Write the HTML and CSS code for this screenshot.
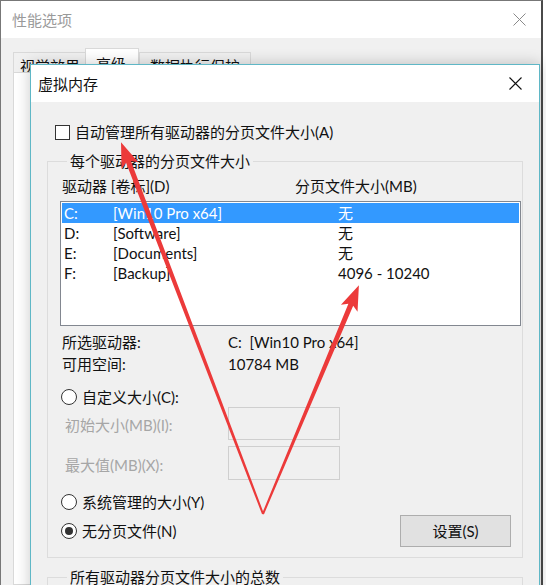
FILE: index.html
```html
<!DOCTYPE html>
<html lang="zh-CN">
<head>
    <meta charset="UTF-8">
    <meta name="viewport" content="width=device-width, initial-scale=1.0">
    <title>虚拟内存</title>
    <link rel="stylesheet" href="styles.css">
</head>
<body>
    <div class="screen">
        <div class="outer">
            <div class="outer-title">
                <span>性能选项</span>
                <svg class="close-icon" width="13" height="13" viewBox="0 0 13 13">
                    <path d="M0.5 0.5 L12.5 12.5 M12.5 0.5 L0.5 12.5" stroke="#8a8a8a" stroke-width="1" fill="none"/>
                </svg>
            </div>
            <div class="outer-body">
                <div class="tabs">
                    <span class="tab">视觉效果</span>
                    <span class="tab active">高级</span>
                    <span class="tab">数据执行保护</span>
                </div>
                <div class="tab-page"></div>
            </div>
        </div>

        <div class="dialog">
            <div class="dlg-title">
                <span>虚拟内存</span>
                <svg class="close-icon" width="13" height="13" viewBox="0 0 13 13">
                    <path d="M0.5 0.5 L12.5 12.5 M12.5 0.5 L0.5 12.5" stroke="#111" stroke-width="1.1" fill="none"/>
                </svg>
            </div>
            <div class="dlg-body">
                <div class="check-row">
                    <span class="checkbox"></span>
                    <span>自动管理所有驱动器的分页文件大小(A)</span>
                </div>

                <fieldset class="group">
                    <legend>每个驱动器的分页文件大小</legend>
                    <div class="list-head">
                        <span>驱动器 [卷标](D)</span>
                        <span>分页文件大小(MB)</span>
                    </div>
                    <div class="listbox">
                        <div class="list-row selected"><span>C:</span><span>[Win10 Pro x64]</span><span>无</span></div>
                        <div class="list-row"><span>D:</span><span>[Software]</span><span>无</span></div>
                        <div class="list-row"><span>E:</span><span>[Documents]</span><span>无</span></div>
                        <div class="list-row"><span>F:</span><span>[Backup]</span><span>4096 - 10240</span></div>
                    </div>

                    <div class="info">
                        <span>所选驱动器:</span><span>C:&nbsp; [Win10 Pro x64]</span>
                        <span>可用空间:</span><span>10784 MB</span>
                    </div>

                    <div class="radio-row first">
                        <span class="radio"></span>
                        <span>自定义大小(C):</span>
                    </div>
                    <div class="field-row">
                        <span class="field-label">初始大小(MB)(I):</span>
                        <span class="field-box"></span>
                    </div>
                    <div class="field-row second">
                        <span class="field-label">最大值(MB)(X):</span>
                        <span class="field-box tall"></span>
                    </div>
                    <div class="radio-row">
                        <span class="radio"></span>
                        <span>系统管理的大小(Y)</span>
                    </div>
                    <div class="bottom-row">
                        <div class="radio-line">
                            <span class="radio checked"></span>
                            <span>无分页文件(N)</span>
                        </div>
                        <span class="button">设置(S)</span>
                    </div>
                </fieldset>

                <fieldset class="group total">
                    <legend>所有驱动器分页文件大小的总数</legend>
                </fieldset>
            </div>
        </div>

        <svg class="arrows" width="546" height="585" viewBox="0 0 546 585">
            <g transform="translate(263 514) rotate(-110.9)">
                <polygon points="0,-1 377,-2.6 373,-9 398,0 373,9 377,2.6 0,1" fill="#ec3a3a"/>
            </g>
            <g transform="translate(263 514) rotate(-67.25)">
                <polygon points="0,-1 227,-2.6 223,-9 248,0 223,9 227,2.6 0,1" fill="#ec3a3a"/>
            </g>
        </svg>
    </div>
</body>
</html>
```

FILE: styles.css
```css
* {
    margin: 0;
    padding: 0;
    box-sizing: border-box;
}

body {
    font-family: Lato, "Noto Sans CJK SC", sans-serif;
    font-size: 15px;
    line-height: 20px;
    color: #111;
    background: #fff;
}

.screen {
    width: 546px;
    height: 585px;
    position: relative;
    overflow: hidden;
}

/* background window */

.outer {
    width: 543px;
    height: 100%;
    border: 1px solid #777;
    border-right: 2px solid #4a4a4a;
    border-bottom: none;
    background: #f0f0f0;
    display: flex;
    flex-direction: column;
}

.outer-title {
    height: 37px;
    flex-shrink: 0;
    background: #fff;
    color: #9a9a9a;
    display: flex;
    align-items: center;
    justify-content: space-between;
    padding: 0 15px 0 11px;
}

.outer-body {
    flex: 1;
    display: flex;
    flex-direction: column;
    padding: 10px 10px 0 12px;
}

.tabs {
    display: flex;
    align-items: flex-end;
    height: 24px;
}

.tab {
    height: 20px;
    padding: 3px 6px 0;
    border: 1px solid #d9d9d9;
    border-bottom: none;
    background: #f0f0f0;
    line-height: 20px;
    overflow: hidden;
}

.tab.active {
    height: 24px;
    padding: 5px 12px 0 10px;
    margin-left: -2px;
    background: #fff;
}

.tab:last-child {
    padding: 3px 10px 0;
}

.tab-page {
    flex: 1;
    background: #fff;
    border: 1px solid #d9d9d9;
}

/* dialog */

.dialog {
    position: absolute;
    left: 30px;
    top: 64px;
    width: 510px;
    height: 560px;
    border: 1px solid #5fb7c6;
    background: #f0f0f0;
    box-shadow: 0 0 14px rgba(0, 0, 0, 0.22);
}

.dlg-title {
    height: 37px;
    background: #fff;
    display: flex;
    align-items: center;
    justify-content: space-between;
    padding: 0 17px 0 7px;
}

.dlg-body {
    padding: 20px 16px 0;
}

.check-row {
    display: flex;
    align-items: center;
    height: 20px;
    padding-left: 8px;
}

.checkbox {
    width: 15px;
    height: 15px;
    border: 1px solid #333;
    background: #fff;
    margin-right: 5px;
}

.group {
    margin-top: 9px;
    border: 1px solid #dcdcdc;
    padding: 5px 0 10px 14px;
    min-width: 0;
}

.group legend {
    margin-left: 5px;
    padding: 0 3px;
    line-height: 20px;
}

.group.total {
    height: 60px;
}

.list-head {
    display: grid;
    grid-template-columns: 233px 1fr;
    height: 20px;
}

.listbox {
    margin: 5px 1px 0 -2px;
    height: 125px;
    border: 1px solid #828790;
    background: #fff;
    padding: 1px;
}

.list-row {
    display: grid;
    grid-template-columns: 49px 225px 1fr;
    height: 20px;
    padding-left: 2px;
}

.list-row.selected {
    background: #3399ff;
    color: #fff;
}

.info {
    display: grid;
    grid-template-columns: 166px 1fr;
    line-height: 22px;
    margin-top: 5px;
}

.radio-row,
.radio-line {
    display: flex;
    align-items: center;
    height: 20px;
}

.radio-row {
    margin-top: 12px;
}

.radio {
    width: 16px;
    height: 16px;
    border: 1px solid #333;
    border-radius: 50%;
    background: #fff;
    margin: 0 5px 0 -1px;
    display: flex;
    align-items: center;
    justify-content: center;
}

.radio.checked::after {
    content: "";
    width: 8px;
    height: 8px;
    border-radius: 50%;
    background: #333;
}

.field-row {
    display: grid;
    grid-template-columns: 166px 112px;
    align-items: center;
}

.field-row.second {
    margin-top: 6px;
}

.field-label {
    color: #a6a6a6;
    padding: 3px 0 0 3px;
}

.field-box {
    height: 33px;
    border: 1px solid #cfcfcf;
    background: #f0f0f0;
}

.field-box.tall {
    height: 34px;
}

.bottom-row {
    display: flex;
    align-items: center;
    justify-content: space-between;
    margin-top: 3px;
    padding-right: 11px;
}

.button {
    width: 111px;
    height: 32px;
    border: 1px solid #adadad;
    background: #e1e1e1;
    text-align: center;
    line-height: 30px;
}

.arrows {
    position: absolute;
    left: 0;
    top: 0;
    pointer-events: none;
}
```
